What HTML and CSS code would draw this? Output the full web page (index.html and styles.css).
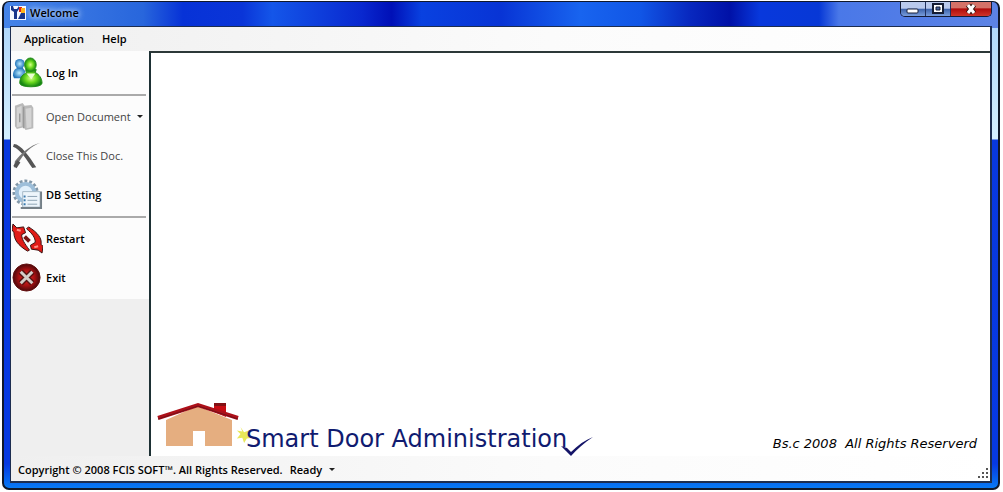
FILE: index.html
```html
<!DOCTYPE html>
<html lang="en">
<head>
<meta charset="utf-8">
<title>Welcome</title>
<link rel="stylesheet" href="styles.css">
</head>
<body>
<div class="window">
  <header class="titlebar">
    <svg class="app-icon" viewBox="0 0 16 16" aria-hidden="true">
      <path d="M0 1h16v14H0z" fill="#f4f7ff"/><path d="M1 1v4l3 2v7h3V7l2-3V1L7 4H4L3 1zM11 8l-3 6h7V8z" fill="#17358c"/><path d="M9 2h3v5H9z" fill="#dd2415"/><path d="M11 3h4v5h-4z" fill="#ffb219"/>
    </svg>
    <h1 class="title">Welcome</h1>
    <div class="controls">
      <button class="control" aria-label="Minimize"><svg viewBox="0 0 14 12"><rect x="1" y="6" width="11" height="4" rx="1" fill="#fff" stroke="#18203c"/></svg></button>
      <button class="control" aria-label="Maximize"><svg viewBox="0 0 14 12"><path d="M2 1h10v9H2z" fill="#fff" stroke="#141c34" stroke-width="2"/><path d="M5 4h4v3H5z" fill="#46639c" stroke="#141c34"/></svg></button>
      <button class="control control-close" aria-label="Close"><svg viewBox="0 0 14 12"><path d="M4 2l6 8M10 2L4 10" stroke="#30100d" stroke-width="5"/><path d="M4 2l6 8M10 2L4 10" stroke="#fff" stroke-width="3"/></svg></button>
    </div>
  </header>
  <div class="client">
    <nav class="menubar"><button class="menu">Application</button><button class="menu">Help</button></nav>
    <div class="workspace">
      <aside class="sidebar">
        <div class="toolbar">
          <button class="tool">
            <svg class="tool-icon" viewBox="0 0 32 32" aria-hidden="true">
              <defs><radialGradient id="green"><stop stop-color="#d5ff8a"/><stop offset=".5" stop-color="#6bd91e"/><stop offset="1" stop-color="#168613"/></radialGradient><radialGradient id="blue"><stop stop-color="#b9eaff"/><stop offset="1" stop-color="#2375bb"/></radialGradient></defs>
              <path d="M1 19c0-5 2-7 5-8h5l3 4-4 7H2z" fill="url(#blue)"/><circle cx="8" cy="7" r="5" fill="url(#blue)"/>
              <path d="M8 27c0-7 4-9 7-11l-1-3h11l-1 3c4 2 7 6 7 11 0 5-23 5-23 0z" fill="url(#green)" stroke="#238d17"/><ellipse cx="19" cy="8" rx="6" ry="7" fill="url(#green)" stroke="#238d17"/>
              <path d="M15 17l5 6 4-6z" fill="#e9ffd1"/>
            </svg><span>Log In</span>
          </button>
          <hr class="separator">
          <button class="tool tool-disabled" disabled>
            <svg class="tool-icon" viewBox="0 0 32 32" aria-hidden="true"><path d="M3 5l8-3 2 3 7-1 2 3v21l-8 2-2-3-7 2-2-3z" fill="#b9b9b9"/><path d="M5 7l5-2v21l-5 1zM14 8l6-1v20l-5 1z" fill="#d4d4d4"/><path d="M12 6v22M8 13v9" stroke="#999" stroke-width="1.5"/></svg>
            <span>Open Document</span><span class="caret"></span>
          </button>
          <button class="tool tool-disabled" disabled>
            <svg class="tool-icon" viewBox="0 0 32 32" aria-hidden="true"><path d="M2 4c7 0 16 13 23 24l-4 1C14 19 9 10 1 7z" fill="#555"/><path d="M29 3C20 6 12 14 7 23l-5 6 1-7C9 14 19 5 29 3z" fill="#777"/><path d="M3 28l4-6" stroke="#555" stroke-width="4"/></svg><span>Close This Doc.</span>
          </button>
          <button class="tool">
            <svg class="tool-icon" viewBox="0 0 32 32" aria-hidden="true"><circle cx="14" cy="14" r="12" fill="none" stroke="#8297a8" stroke-width="3" stroke-dasharray="3 2"/><circle cx="14" cy="14" r="9" fill="#e2f0fb" stroke="#9dbed9" stroke-width="4"/><path d="M11 13h18v16H11z" fill="#edf5fb" stroke="#a6b9c7"/><path d="M30 13v17H9" fill="none" stroke="#747f87" stroke-width="2"/><path d="M16 18h10M16 22h10M16 26h10" stroke="#8ba2b3"/><path d="M12 18h2M12 22h2M12 26h2" stroke="#3879ad" stroke-width="2"/></svg><span>DB Setting</span>
          </button>
          <hr class="separator">
          <button class="tool">
            <svg class="tool-icon" viewBox="0 0 32 32" aria-hidden="true"><path d="M1 1l4 4 7-1 2 6-4 2c0 5 3 9 8 16l-2 1C6 23 2 17 2 10L0 7z" fill="#e01b17" stroke="#35100e"/><path d="M31 31l-4-3-7-1-1-4 5-3c0-5-3-9-9-14l2-2c10 6 14 12 13 18l2 2z" fill="#e01b17" stroke="#35100e"/><path d="M5 7l4 1M23 25l4-1" stroke="#ff9186" stroke-width="2"/><path d="M13 14l5 5" stroke="#771513" stroke-width="4"/></svg><span>Restart</span>
          </button>
          <button class="tool">
            <svg class="tool-icon" viewBox="0 0 32 32" aria-hidden="true"><defs><radialGradient id="red"><stop stop-color="#ee2926"/><stop offset=".6" stop-color="#a51012"/><stop offset="1" stop-color="#4b090b"/></radialGradient></defs><circle cx="15" cy="16" r="14" fill="url(#red)" stroke="#64100f"/><path d="M9 10l12 12M21 10L9 22" stroke="#551313" stroke-width="6"/><path d="M9 10l12 12M21 10L9 22" stroke="#d4cdc9" stroke-width="3"/></svg><span>Exit</span>
          </button>
        </div>
      </aside>
      <main class="canvas">
        <div class="brand">
          <svg class="house" viewBox="0 0 84 46" aria-hidden="true"><path d="M9 18L40 4l35 14v26H48V29H36v15H9z" fill="#e5ae80"/><path d="M57 1h12v14l-12-5z" fill="#c90c13"/><path d="M57 1h12v3H57z" fill="#821014"/><path d="M1 16L41 3l40 13" fill="none" stroke="#ad1019" stroke-width="4"/><path d="M1 17L41 4l40 13" fill="none" stroke="#71101a"/></svg>
          <svg class="spark" viewBox="0 0 20 20" aria-hidden="true"><path d="M5 1l4 6 8-3-4 6 6 3-7 1-3 5-2-6-6 1 4-5-4-4 6 1z" fill="#e9e758"/></svg>
          <span class="brand-name">Smart Door Administration</span>
          <svg class="check" viewBox="0 0 34 20" aria-hidden="true"><path d="M1 10l6 2 4 4C18 9 25 4 33 1 24 7 17 13 11 20z" fill="#151568"/></svg>
        </div>
        <p class="rights">Bs.c 2008&nbsp; All Rights Reserverd</p>
      </main>
    </div>
    <footer class="statusbar">
      <span>Copyright © 2008 FCIS SOFT™. All Rights Reserved.</span>
      <button class="ready">Ready<span class="caret"></span></button>
      <svg class="grip" viewBox="0 0 12 12" aria-hidden="true"><path d="M9 1h2v2H9zM5 5h2v2H5zM9 5h2v2H9zM1 9h2v2H1zM5 9h2v2H5zM9 9h2v2H9z" fill="#555"/></svg>
    </footer>
  </div>
</div>
</body>
</html>
```
FILE: styles.css
```css
* { box-sizing: border-box; }

body {
  margin: 0;
  padding: 1px 3px 2px 2px;
  background: #fff;
  color: #000;
  font: 600 11px/16px "Open Sans", "Noto Sans", sans-serif;
}

button {
  padding: 0;
  border: 0;
  background: none;
  color: inherit;
  font: inherit;
}

.window {
  display: flex;
  flex-direction: column;
  min-height: calc(100vh - 3px);
  padding: 0 6px 5px;
  border: 2px solid #10182a;
  border-top-width: 1px;
  border-radius: 7px;
  background:
    linear-gradient(90deg, #4684e8, #2866dc 14%, #0732d7 18%, #0a35d8 24%, #1456e9 27%, #0928cf 36%, #0010b7 39%, #0941e0 42%, #0834d5 50%, #1864ef 58%, #1156e6 64%, #0828bf 69%, #0011a7 73%, #0838dc 76%, #0738d6 82%, #4a78e8 84%, #5c83e5) top / 100% 26px no-repeat,
    linear-gradient(#a8d2fa 0, #d4efff 137px, #0838df 138px, #0639e2 95%, #087af5);
}

.titlebar {
  display: flex;
  align-items: flex-start;
  height: 24px;
}

.app-icon {
  width: 16px;
  height: 16px;
  margin: 3px 4px 0 0;
}

.title {
  margin: 3px 0 0;
  font: inherit;
  text-shadow: 0 0 6px #dceaff, 0 0 6px #b4d0ff;
}

.controls {
  display: flex;
  margin-left: auto;
  border: 1px solid #141c38;
  border-top: 0;
  border-radius: 0 0 5px 5px;
  overflow: hidden;
}

.control {
  display: grid;
  place-items: center;
  width: 25px;
  height: 14px;
  border-right: 1px solid #20305e;
  background: linear-gradient(#b9c9ec 45%, #3c62aa 50%, #789ddc);
}

.control svg {
  width: 14px;
  height: 12px;
}

.control-close {
  width: 40px;
  border-right: 0;
  background: linear-gradient(#d57268 40%, #b00d0c 50%, #cf3428);
}

.client {
  display: flex;
  flex: 1;
  flex-direction: column;
  border: 2px solid #1c2d50;
  border-top-width: 1px;
  border-left-width: 1px;
  background: linear-gradient(90deg, #efefef, #fbfbfb 55%, #fff);
}

.menubar {
  display: flex;
  gap: 18px;
  align-items: center;
  height: 24px;
  padding-left: 13px;
}

.workspace {
  display: flex;
  flex: 1;
}

.sidebar {
  flex: none;
  width: 138px;
  background: #efefef;
}

.toolbar {
  padding: 2px 3px 2px 1px;
  background: #fcfcfc;
}

.tool {
  display: flex;
  gap: 3px;
  align-items: center;
  width: 100%;
  height: 39px;
  white-space: nowrap;
}

.tool-icon {
  flex: none;
  width: 31px;
  height: 31px;
}

.tool-disabled {
  color: #444;
  font-weight: 400;
}

.separator {
  height: 2px;
  margin: 2px 0 1px;
  border: 0;
  background: #aaa;
}

.caret {
  border: 3px solid transparent;
  border-top-color: #222;
  border-bottom: 0;
}

.tool .caret {
  margin-left: 3px;
}

.canvas {
  display: flex;
  flex: 1;
  align-items: flex-end;
  justify-content: space-between;
  padding: 0 13px 0 6px;
  border-top: 2px solid #2c3838;
  border-left: 2px solid #1d3034;
  background: #fff;
}

.brand {
  display: flex;
  align-items: flex-end;
  white-space: nowrap;
}

.house {
  width: 84px;
  height: 46px;
  margin-bottom: 8px;
}

.spark {
  width: 18px;
  height: 18px;
  margin: 0 -8px 12px -5px;
}

.brand-name {
  margin-bottom: 4px;
  color: #101b70;
  font: 24px/26px "DejaVu Sans", sans-serif;
}

.check {
  width: 34px;
  height: 20px;
  margin-left: -7px;
}

.rights {
  margin: 0 0 4px;
  font: oblique 13px/16px "DejaVu Sans", sans-serif;
  white-space: nowrap;
}

.statusbar {
  display: flex;
  gap: 7px;
  align-items: center;
  height: 25px;
  padding: 2px 1px 0 7px;
}

.ready {
  display: flex;
  gap: 7px;
  align-items: center;
}

.grip {
  align-self: flex-end;
  width: 12px;
  height: 12px;
  margin: 0 0 2px auto;
}
```
